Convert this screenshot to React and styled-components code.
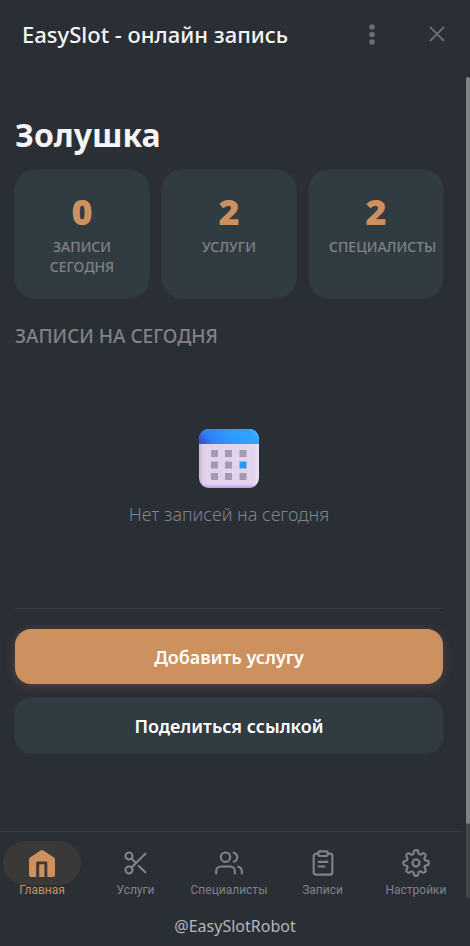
import React from 'react'
import styled, { createGlobalStyle } from 'styled-components'
import { FiScissors, FiUsers, FiSettings } from 'react-icons/fi'

// ── Tokens ────────────────────────────────────────────────────────────────────
const c = {
  bg: '#2a2e35',
  card: '#313b42',
  cardBorder: '#30373c',
  line: '#333d45',
  accent: '#cc915e',
  accentSoft: '#3b3938',
  text: '#f5f5f5',
  muted: '#808387',
  icon: '#6c6d6f',
}

const font = {
  ui: "'Noto Sans', 'Open Sans', sans-serif",
  nav: "Roboto, 'Liberation Sans', sans-serif",
}

const GlobalStyle = createGlobalStyle`
  *, *::before, *::after {
    box-sizing: border-box;
  }

  body {
    margin: 0;
    background: ${c.bg};
    color: ${c.text};
    font-family: ${font.ui};
  }
`

// ── Shell ─────────────────────────────────────────────────────────────────────
const Shell = styled.div`
  display: flex;
  flex-direction: column;
  min-height: 100vh;
`

const TitleBar = styled.header`
  display: flex;
  align-items: center;
  height: 68px;
  margin-bottom: 9px;
  padding: 0 21px 0 22px;
`

const BarTitle = styled.div`
  flex: 1;
  font-size: 22px;
  font-weight: 500;
  line-height: 30px;
  white-space: nowrap;
`

const BarActions = styled.div`
  display: flex;
  gap: 41px;
`

const IconButton = styled.button`
  display: flex;
  align-items: center;
  justify-content: center;
  width: 24px;
  height: 24px;
  padding: 0;
  border: none;
  background: none;
  color: ${c.icon};
  cursor: pointer;
`

const Body = styled.div`
  display: flex;
  flex: 1;
`

const Page = styled.div`
  display: flex;
  flex: 1;
  flex-direction: column;
  min-width: 0;
`

const ScrollTrack = styled.div`
  display: flex;
  flex-direction: column;
  width: 4px;
  border-radius: 2px;
  background: #42464a;
`

const ScrollThumb = styled.div`
  height: 91%;
  border-radius: 2px;
  background: #808384;
`

// ── Main content ──────────────────────────────────────────────────────────────
const Main = styled.main`
  display: flex;
  flex: 1;
  flex-direction: column;
  padding: 36px 23px 78px 15px;
`

const Heading = styled.h1`
  margin: 0 0 13px;
  font-size: 32px;
  font-weight: 700;
  line-height: 44px;
`

const Stats = styled.div`
  display: grid;
  grid-template-columns: repeat(3, minmax(0, 1fr));
  gap: 13px;
`

const StatCard = styled.div`
  min-height: 128px;
  padding: 20px;
  border-radius: 20px;
  background: ${c.card};
  box-shadow: 0 0 0 1px ${c.cardBorder};
  text-align: center;
`

const StatValue = styled.div`
  color: ${c.accent};
  font-size: 36px;
  font-weight: 900;
  line-height: 44px;
`

const StatLabel = styled.div`
  margin-top: 3px;
  color: ${c.muted};
  font-size: 14px;
  font-weight: 500;
  line-height: 20px;
  text-transform: uppercase;
`

const SectionTitle = styled.h2`
  margin: 25px 0 0;
  color: ${c.muted};
  font-size: 19px;
  font-weight: 500;
  line-height: 26px;
  text-transform: uppercase;
`

const Empty = styled.div`
  display: flex;
  flex: 1;
  flex-direction: column;
  align-items: center;
  justify-content: center;
  gap: 11px;
`

const EmptyText = styled.p`
  margin: 0;
  color: ${c.muted};
  font-size: 18px;
  font-weight: 300;
  line-height: 28px;
`

const Actions = styled.div`
  display: flex;
  flex-direction: column;
  gap: 14px;
  padding-top: 20px;
  border-top: 1px solid ${c.line};
`

const ActionButton = styled.button`
  height: 55px;
  border: none;
  border-radius: 16px;
  background: ${({ $primary }) => $primary ? c.accent : c.card};
  box-shadow: ${({ $primary }) => $primary
    ? '0 2px 12px rgba(204, 145, 94, 0.25)'
    : `0 0 0 1px ${c.cardBorder}`};
  color: #fff;
  font-family: ${font.ui};
  font-size: 18px;
  font-weight: 600;
  cursor: pointer;
`

// ── Bottom navigation ─────────────────────────────────────────────────────────
const Nav = styled.nav`
  display: flex;
  justify-content: space-between;
  margin-right: 3px;
  padding: 9px 8px 0 3px;
  border-top: 1px solid ${c.line};
`

const NavLink = styled.a`
  display: flex;
  flex-direction: column;
  align-items: center;
  width: 78px;
  color: ${({ $active }) => $active ? c.accent : c.muted};
  font-family: ${font.nav};
  font-size: 12px;
  line-height: 16px;
  text-decoration: none;
  white-space: nowrap;
`

const NavIcon = styled.span`
  display: flex;
  align-items: center;
  justify-content: center;
  width: 100%;
  height: 44px;
  margin-bottom: -3px;
  border-radius: 22px;
  background: ${({ $active }) => $active ? c.accentSoft : 'transparent'};
`

const BotName = styled.footer`
  padding: 16px 0 8px;
  color: #b4b6b8;
  font-size: 16px;
  line-height: 24px;
  text-align: center;
`

// ── Drawings ──────────────────────────────────────────────────────────────────
function DotsIcon() {
  return (
    <svg width="24" height="24" viewBox="0 0 24 24" fill="currentColor" aria-hidden="true">
      <circle cx="12" cy="5" r="2.8" />
      <circle cx="12" cy="12.5" r="2.8" />
      <circle cx="12" cy="20" r="2.8" />
    </svg>
  )
}

function CloseIcon() {
  return (
    <svg width="24" height="24" viewBox="0 0 24 24" stroke="currentColor" strokeWidth="1.8" strokeLinecap="round" aria-hidden="true">
      <path d="M5.500 5.500l13 13M18.500 5.500l-13 13" />
    </svg>
  )
}

function HomeIcon() {
  return (
    <svg width="26" height="27" viewBox="0 0 26 27" fill="currentColor" aria-hidden="true">
      <path d="M11.7.5a2.4 2.4 0 0 1 2.6 0l10.4 6.700A2.800 2.800 0 0 1 26 9.600V24.400a2.600 2.600 0 0 1-2.600 2.600H18.300V12.700a1.200 1.200 0 0 0-1.200-1.200H8.400a1.200 1.200 0 0 0-1.200 1.200V27H2.600A2.600 2.600 0 0 1 0 24.400V9.600a2.800 2.800 0 0 1 1.300-2.400z" />
      <path d="M10.200 14.300h5.200V27h-5.200z" />
    </svg>
  )
}

function ClipboardIcon() {
  return (
    <svg
      width="28"
      height="28"
      viewBox="0 0 24 24"
      fill="none"
      stroke="currentColor"
      strokeWidth="1.8"
      strokeLinecap="round"
      strokeLinejoin="round"
      aria-hidden="true"
    >
      <path d="M16 4h2a2 2 0 0 1 2 2v14a2 2 0 0 1-2 2H6a2 2 0 0 1-2-2V6a2 2 0 0 1 2-2h2" />
      <rect x="8" y="2" width="8" height="4" rx="1" />
      <path d="M8.200 11h7.600M8.200 15h5" />
    </svg>
  )
}

function CalendarArt() {
  return (
    <svg width="60" height="60" viewBox="0 0 60 60" aria-hidden="true">
      <defs>
        <clipPath id="cal-shape">
          <rect width="60" height="59" rx="10" />
        </clipPath>
        <linearGradient id="cal-top" x1="0" y1="0.6" x2="1" y2="0.4">
          <stop offset="0" stopColor="#3a50d8" />
          <stop offset="0.16" stopColor="#3080f4" />
          <stop offset="0.5" stopColor="#2e98ff" />
          <stop offset="0.88" stopColor="#2fa4ff" />
          <stop offset="1" stopColor="#3cb4ff" />
        </linearGradient>
        <linearGradient id="cal-side">
          <stop offset="0" stopColor="#c4b8cc" />
          <stop offset="0.08" stopColor="#dfd2ea" />
          <stop offset="0.92" stopColor="#e2d5ef" />
          <stop offset="1" stopColor="#ece2f5" />
        </linearGradient>
        <linearGradient id="cal-bottom" x1="0" y1="0" x2="0" y2="1">
          <stop offset="0" stopColor="#c89bed" stopOpacity="0" />
          <stop offset="1" stopColor="#c594ec" />
        </linearGradient>
      </defs>
      <g clipPath="url(#cal-shape)">
        <rect width="60" height="60" fill="url(#cal-side)" />
        <rect y="55" width="60" height="4" fill="url(#cal-bottom)" />
        <rect width="60" height="15" fill="url(#cal-top)" />
      </g>
      {[21, 32.5, 44].map((y, row) =>
        [12, 26, 40.5].map((x, col) => (
          <rect
            key={`${row}-${col}`}
            x={x}
            y={y}
            width="7"
            height="7"
            fill={row === 1 && col === 2 ? '#2e98f5' : '#a59bb1'}
          />
        ))
      )}
    </svg>
  )
}

// ── Data ──────────────────────────────────────────────────────────────────────
const stats = [
  { value: 0, label: 'Записи сегодня' },
  { value: 2, label: 'Услуги' },
  { value: 2, label: 'Специалисты' },
]

const links = [
  { id: 'home', label: 'Главная', icon: <HomeIcon />, active: true },
  { id: 'services', label: 'Услуги', icon: <FiScissors size={28} strokeWidth={1.8} /> },
  { id: 'staff', label: 'Специалисты', icon: <FiUsers size={28} strokeWidth={1.8} /> },
  { id: 'bookings', label: 'Записи', icon: <ClipboardIcon /> },
  { id: 'settings', label: 'Настройки', icon: <FiSettings size={28} strokeWidth={1.8} /> },
]

export default function App() {
  return (
    <Shell>
      <GlobalStyle />
      <TitleBar>
        <BarTitle>EasySlot - онлайн запись</BarTitle>
        <BarActions>
          <IconButton type="button" aria-label="Меню">
            <DotsIcon />
          </IconButton>
          <IconButton type="button" aria-label="Закрыть">
            <CloseIcon />
          </IconButton>
        </BarActions>
      </TitleBar>

      <Body>
        <Page>
          <Main>
            <Heading>Золушка</Heading>
            <Stats>
              {stats.map(({ value, label }) => (
                <StatCard key={label}>
                  <StatValue>{value}</StatValue>
                  <StatLabel>{label}</StatLabel>
                </StatCard>
              ))}
            </Stats>
            <SectionTitle>Записи на сегодня</SectionTitle>
            <Empty>
              <CalendarArt />
              <EmptyText>Нет записей на сегодня</EmptyText>
            </Empty>
            <Actions>
              <ActionButton type="button" $primary>Добавить услугу</ActionButton>
              <ActionButton type="button">Поделиться ссылкой</ActionButton>
            </Actions>
          </Main>

          <Nav>
            {links.map(({ id, label, icon, active }) => (
              <NavLink key={id} href={`#${id}`} $active={active}>
                <NavIcon $active={active}>{icon}</NavIcon>
                {label}
              </NavLink>
            ))}
          </Nav>
        </Page>
        <ScrollTrack>
          <ScrollThumb />
        </ScrollTrack>
      </Body>

      <BotName>@EasySlotRobot</BotName>
    </Shell>
  )
}
